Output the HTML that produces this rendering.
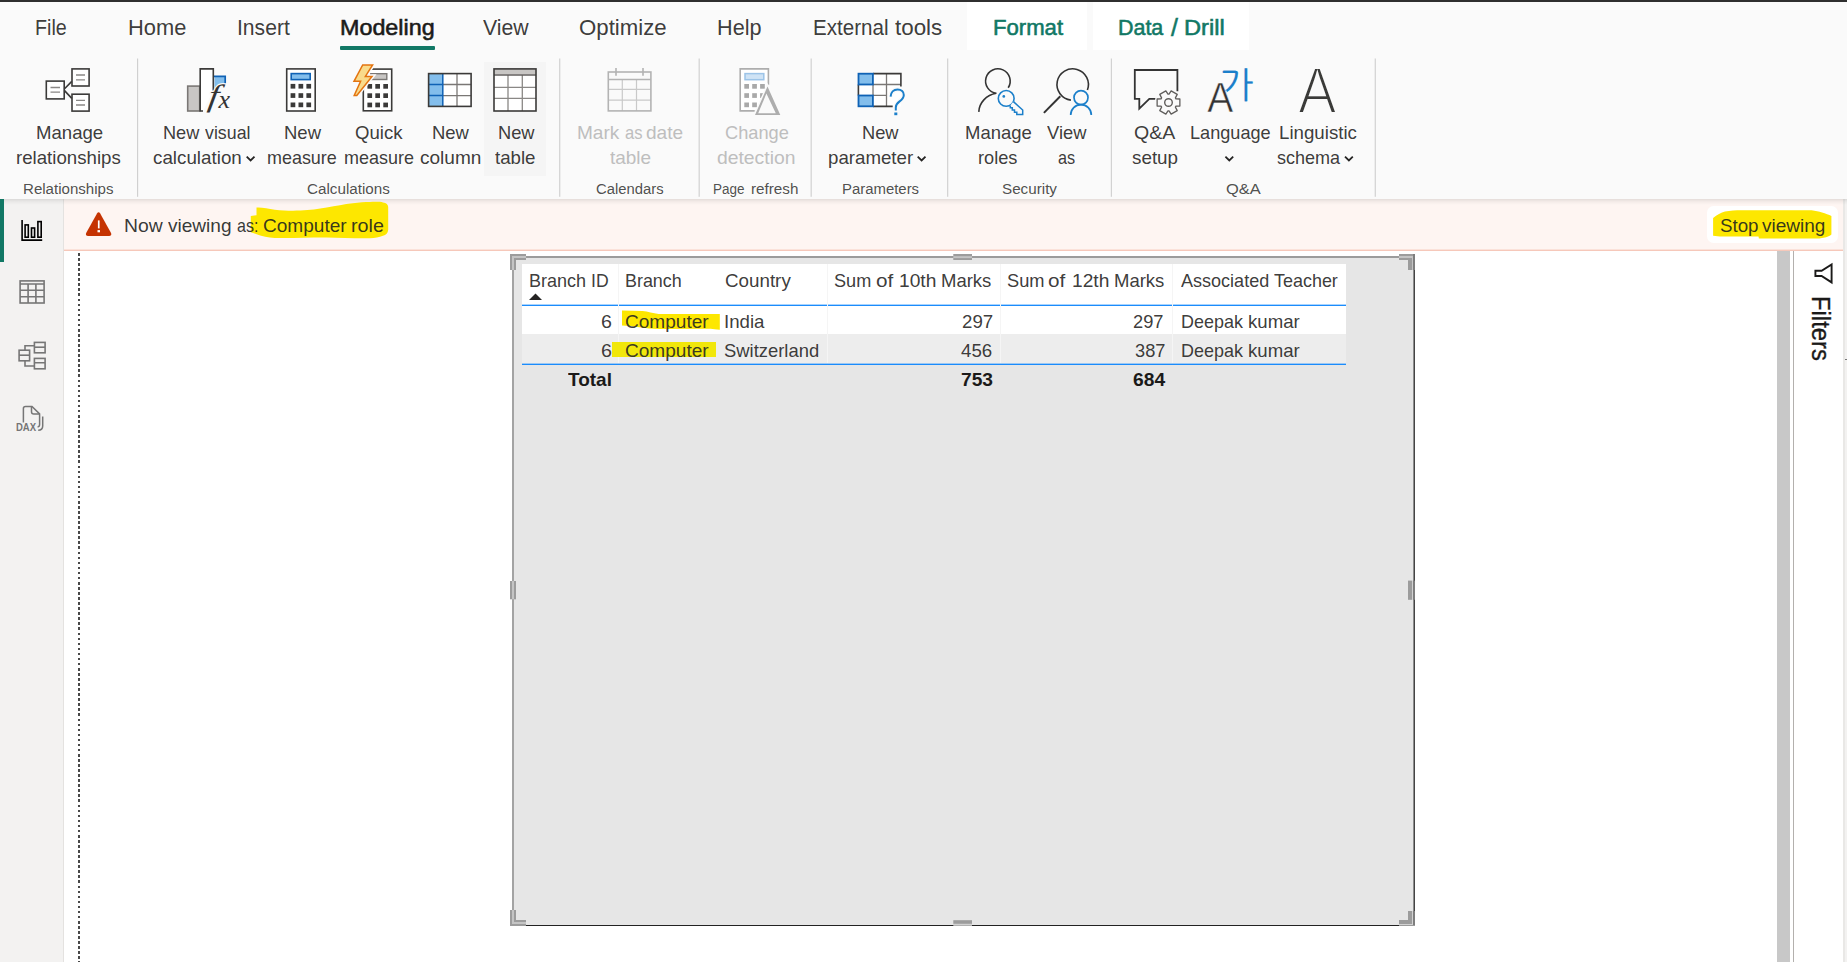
<!DOCTYPE html>
<html lang="en">
<head>
<meta charset="utf-8">
<title>Power BI Desktop - Modeling - View as role</title>
<style>
html,body{margin:0;padding:0;}
body{width:1847px;height:962px;overflow:hidden;position:relative;background:#fff;font-family:"Liberation Sans",sans-serif;color:#252423;}
.a{position:absolute;}
.t{position:absolute;white-space:pre;line-height:1;transform-origin:0 0;color:#252423;}
.sb{-webkit-text-stroke:0.55px currentColor;}
#topbar{left:0;top:0;width:1847px;height:2px;background:#2f2f2f;}
#tabrow{left:0;top:2px;width:1847px;height:48px;background:#fafafa;}
#ribbon{left:0;top:50px;width:1847px;height:149px;background:#fafafa;}
.ctab{top:2px;height:47.5px;background:#fff;}
.sep{top:59px;width:1px;height:138px;background:#d4d4d4;}
#hover{left:484px;top:62px;width:62px;height:113.5px;background:#f5f5f5;}
#mund{left:339.7px;top:46px;width:95.1px;height:3.8px;background:#117865;border-radius:1px;}
#side{left:0;top:199px;width:63px;height:763px;background:#f3f2f1;border-right:1px solid #e4e2e0;}
#selbar{left:0;top:199px;width:4px;height:63px;background:#117865;}
#note{left:64px;top:199px;width:1779.5px;height:50px;background:#fef5f2;}
#nb1{left:64px;top:249px;width:1779.5px;height:1px;background:#fbe2da;}
#nb2{left:64px;top:250px;width:1779.5px;height:1px;background:#f6c8ba;}
#shadow{left:0;top:199px;width:1847px;height:6px;background:linear-gradient(to bottom,rgba(0,0,0,.10),rgba(0,0,0,.04) 45%,rgba(0,0,0,0));}
#stopbtn{left:1706.7px;top:205.9px;width:131.2px;height:37.5px;background:#fff;border-radius:6.5px;}
#dots{left:78.2px;top:253px;width:2.3px;height:709px;background:repeating-linear-gradient(to bottom,#484848 0,#484848 2.6px,rgba(255,255,255,0) 2.6px,rgba(255,255,255,0) 5.06px);}
#vscroll{left:1777px;top:251px;width:13px;height:711px;background:#c8c8c8;}
#fline{left:1793px;top:251px;width:1px;height:711px;background:#b3b0ad;}
#rstrip{left:1843px;top:199px;width:4px;height:763px;background:linear-gradient(to right,#e9e8e6 0,#e9e8e6 50%,#f3f2f1 50%,#f3f2f1 100%);}
#rtick{left:1845px;top:359px;width:2px;height:1px;background:#777;}
#visual{left:512px;top:256px;width:903px;height:670px;background:#e6e6e6;}
#vb-l{left:512px;top:256px;width:2px;height:670px;background:#a3a3a3;}
#vb-t{left:512px;top:256px;width:903px;height:2px;background:#9b9b9b;}
#vb-r{left:1413px;top:256px;width:2px;height:670px;background:linear-gradient(to right,#8c8c8c 0,#8c8c8c 40%,#444 40%,#444 100%);}
#vb-b{left:512px;top:925px;width:903px;height:1px;background:#222;}
.hd{background:#9c9c9c;}
.hl{background:#c2c2c2;}
#thead{left:522px;top:264px;width:824px;height:41px;background:#fff;}
#row1{left:522px;top:306px;width:824px;height:28px;background:#fff;}
#row2{left:522px;top:334px;width:824px;height:30px;background:#ededed;}
.bl{left:522px;width:824px;height:2px;background:linear-gradient(to bottom,rgba(27,140,252,.38) 0,rgba(27,140,252,.38) 1px,#1b8cfc 1px,#1b8cfc 2px);}
.cs{top:264px;width:1px;height:99px;background:#f5f5f5;}
#filters{-webkit-text-stroke:0.35px #1b1a19;left:1834.1px;top:296.2px;font-size:26.5px;line-height:1;white-space:pre;transform-origin:0 0;color:#1b1a19;}
</style>
</head>
<body>
<div class="a" id="topbar"></div>
<div class="a" id="tabrow"></div>
<div class="a" id="ribbon"></div>
<div class="a ctab" style="left:967px;width:120px;"></div>
<div class="a ctab" style="left:1093px;width:156px;"></div>
<div class="a" id="mund"></div>
<div class="a" id="hover"></div>

<div class="a" id="side"></div>
<div class="a" id="note"></div>
<div class="a" id="nb1"></div>
<div class="a" id="nb2"></div>
<div class="a" id="rstrip"></div>
<div class="a" id="rtick"></div>
<div class="a" id="shadow"></div>
<div class="a" id="selbar"></div>
<div class="a" id="stopbtn"></div>

<div class="a" id="dots"></div>
<div class="a" id="vscroll"></div>
<div class="a" id="fline"></div>

<div class="a" id="visual"></div>
<div class="a" id="vb-l"></div>
<div class="a" id="vb-t"></div>
<div class="a" id="vb-r"></div>
<div class="a" id="vb-b"></div>
<div class="a" id="thead"></div>
<div class="a" id="row1"></div>
<div class="a" id="row2"></div>
<div class="a bl" style="top:304px"></div>
<div class="a cs" style="left:618px"></div>
<div class="a cs" style="left:827px"></div>
<div class="a cs" style="left:1000px"></div>
<div class="a cs" style="left:1172px"></div>
<div class="a bl" style="top:363px"></div>

<svg class="a" style="left:0;top:0;pointer-events:none" width="1847" height="962" viewBox="0 0 1847 962">
<rect x="137.0" y="58.5" width="1.15" height="138.3" fill="#d0d0d0"/>
<rect x="559.15" y="58.5" width="1.15" height="138.3" fill="#d0d0d0"/>
<rect x="698.6" y="58.5" width="1.15" height="138.3" fill="#d0d0d0"/>
<rect x="810.6" y="58.5" width="1.15" height="138.3" fill="#d0d0d0"/>
<rect x="947.1" y="58.5" width="1.15" height="138.3" fill="#d0d0d0"/>
<rect x="1110.8" y="58.5" width="1.15" height="138.3" fill="#d0d0d0"/>
<rect x="1374.7" y="58.5" width="1.15" height="138.3" fill="#d0d0d0"/>
<g fill="#fde700">
<path d="M250.8 216 L256.5 215.2 L256.5 207.6 C262 207.2 268 209 274.7 209.7 C284 210.8 292 210.8 300.7 210.6 C310 210.2 318 209.2 326.7 207.6 C336 205.8 344 204.2 352.7 203.2 C359 202.3 365 201.9 370 201.9 C376 201.8 381 201.8 383 202.4 C386.5 203 388.2 204.5 388.2 207 L388.2 229.7 C388 233 386 235 383 235.8 C379 237.4 375 238.2 370 238.3 C356 238.6 340 237.7 326.7 237.5 C310 237.4 292 238.2 274.7 237.9 C268 237.6 262 236.2 257.3 234.4 L250.8 232.3 Z"/>
<path d="M1713.1 217.9 C1717 215 1721 212.8 1725 211.6 C1730 210.4 1736 210.2 1741.4 210.2 L1811.5 210.2 C1815.5 210.6 1819 211.6 1822 212.5 C1825.5 213.5 1829 214.8 1831.4 216 L1831.4 234.6 C1830 236 1827.5 237 1825 237.5 C1823 238 1821 238.3 1819.4 238.4 L1758.9 238.4 L1758.5 236.5 L1719.9 236.5 L1713.1 235.8 Z"/>
<path d="M622 310.5 L642.5 311.1 C648 311.6 653 313.6 658.7 314 L719.8 314.1 L719.8 329.7 C716 329.6 713 328.9 710.7 328.7 L668.5 329 C662 329 655 328.8 649 328.4 C642 327.8 636 326.9 629.5 326.1 L622 325.4 Z"/>
</g>
<path fill="#f1e70b" d="M612 342 L716 342 L716 357 L612 357 Z"/>
<g fill="#fff" stroke="#3b3a39" stroke-width="1.6">
<rect x="46.3" y="81.1" width="17.9" height="17.8"/><rect x="72" y="68.9" width="17.1" height="17.1"/><rect x="72" y="94.2" width="17.1" height="16.9"/>
<path fill="none" d="M64.3 89 L71.8 81.4 M64.3 90.4 L71.8 98.4"/>
</g>
<g stroke="#8a8886" stroke-width="1.3" fill="none"><path d="M50.5 87.5H60M50.5 92.2H60M76 75H85M76 79.8H85M76 100.3H85M76 105H85"/></g>
<rect x="187.7" y="86.1" width="12" height="24.9" fill="#c8c6c4" stroke="#7a7775" stroke-width="1.6"/>
<path d="M226 83.5 L226 76.4 L214.5 76.4 L214.5 90 C216 86 220 83.8 226 83.5Z" fill="#83beec"/>
<path d="M214 76.4 L225.2 76.4 L225.2 83.6" fill="none" stroke="#0f62b5" stroke-width="1.7"/>
<path d="M213.3 90.6 L213.3 68.9 L200.2 68.9 L200.2 111 L203 111" fill="#fff" stroke="#3b3a39" stroke-width="1.6"/>
<text transform="translate(207.2 106.2) skewX(-9) scale(1.2 1)" x="0" y="0" font-family="'Liberation Serif',serif" font-style="italic" font-size="31" fill="#333" stroke="#fafafa" stroke-width="2.2" paint-order="stroke">f</text>
<text x="218.4" y="108.4" font-family="'Liberation Serif',serif" font-style="italic" font-size="26" fill="#333" stroke="#fafafa" stroke-width="2.4" paint-order="stroke">x</text>
<rect x="286.7" y="68.9" width="28.5" height="42.1" fill="#fff" stroke="#3b3a39" stroke-width="1.6"/>
<rect x="291.2" y="73.6" width="19" height="6" fill="#83beec" stroke="#0f62b5" stroke-width="1.6"/>
<g fill="#3b3a39"><rect x="290.6" y="83.9" width="4.7" height="4.7"/><rect x="298.5" y="83.9" width="4.7" height="4.7"/><rect x="306.4" y="83.9" width="4.7" height="4.7"/><rect x="290.6" y="93.2" width="4.7" height="4.7"/><rect x="298.5" y="93.2" width="4.7" height="4.7"/><rect x="306.4" y="93.2" width="4.7" height="4.7"/><rect x="290.6" y="102.5" width="4.7" height="4.7"/><rect x="298.5" y="102.5" width="4.7" height="4.7"/><rect x="306.4" y="102.5" width="4.7" height="4.7"/></g>
<rect x="363.3" y="69.1" width="28.4" height="41.7" fill="#fff" stroke="#3b3a39" stroke-width="1.6"/>
<rect x="370.8" y="73.7" width="16" height="5.8" fill="#c8c6c4" stroke="#7a7775" stroke-width="1.4"/>
<g fill="#3b3a39"><rect x="367.4" y="84" width="4.7" height="4.7"/><rect x="375.3" y="84" width="4.7" height="4.7"/><rect x="383.3" y="84" width="4.7" height="4.7"/><rect x="367.4" y="93.3" width="4.7" height="4.7"/><rect x="375.3" y="93.3" width="4.7" height="4.7"/><rect x="383.3" y="93.3" width="4.7" height="4.7"/><rect x="367.4" y="102.6" width="4.7" height="4.7"/><rect x="375.3" y="102.6" width="4.7" height="4.7"/><rect x="383.3" y="102.6" width="4.7" height="4.7"/></g>
<path d="M362.7 65 L372.6 65 L365.4 76.4 L372 76.4 L356.8 95.4 L354.2 95.4 L360.6 81.3 L354 81.3 Z" fill="#fafafa" stroke="#fafafa" stroke-width="4.4" stroke-linejoin="miter"/>
<path d="M362.7 65 L372.6 65 L365.4 76.4 L372 76.4 L356.8 95.4 L354.2 95.4 L360.6 81.3 L354 81.3 Z" fill="#f9db8b" stroke="#e37410" stroke-width="1.5" stroke-linejoin="miter"/>
<rect x="428.6" y="73.6" width="42.5" height="32.8" fill="#fff" stroke="none"/>
<rect x="428.6" y="73.6" width="14.2" height="32.8" fill="#83beec"/>
<path d="M457 73.6V106.4M442.8 84.5H471M442.8 95.6H471" stroke="#7a7775" stroke-width="1.3" fill="none"/>
<path d="M442.8 73.6V106.4M429 84.5H442.8M429 95.6H442.8" stroke="#0f62b5" stroke-width="1.5" fill="none"/>
<rect x="428.6" y="73.6" width="42.5" height="32.8" fill="none" stroke="#3b3a39" stroke-width="1.6"/>
<rect x="494" y="68.9" width="42" height="42.1" fill="#fff"/>
<rect x="494" y="69" width="42" height="5.4" fill="#c8c6c4"/>
<path d="M508 75V111M522.3 75V111M494 87.4H536M494 98.4H536" stroke="#8a8886" stroke-width="1.3" fill="none"/>
<path d="M494 75H536" stroke="#605e5c" stroke-width="1.5" fill="none"/>
<rect x="494" y="68.9" width="42" height="42.1" fill="none" stroke="#3b3a39" stroke-width="1.6"/>
<g fill="none" stroke="#c9c9c9" stroke-width="1.2"><path d="M622.3 79.5V111M636.5 79.5V111M608 89.3H651M608 100.1H651"/></g>
<g fill="none" stroke="#b3b3b3" stroke-width="1.6"><rect x="608.3" y="72" width="42.6" height="38.9" fill="none"/><path d="M608 79.5H651M616 68V75.8M643 68V75.8"/></g>
<path d="M768.4 84.7V68.9H740.2V110.9H754.7" fill="#fff" stroke="#adadad" stroke-width="1.6"/>
<rect x="745" y="73.6" width="18.8" height="6.1" fill="#cfe3f5" stroke="#9cc4e8" stroke-width="1.5"/>
<g fill="#a9a9a9"><rect x="744.3" y="84" width="4.7" height="4.7"/><rect x="752.2" y="84" width="4.7" height="4.7"/><rect x="760.1" y="84" width="4.7" height="4.7"/><rect x="744.3" y="93.2" width="4.7" height="4.7"/><rect x="752.2" y="93.2" width="4.7" height="4.7"/><rect x="760.1" y="93.2" width="4.7" height="4.7"/><rect x="744.3" y="102.5" width="4.7" height="4.7"/><rect x="752.2" y="102.5" width="4.7" height="4.7"/><rect x="760.1" y="102.5" width="4.7" height="4.7"/></g>
<path d="M767.5 86.5 L780.3 115 L755 115 Z" fill="#fafafa" stroke="#fafafa" stroke-width="3"/>
<path d="M767.5 86.5 L780.3 115 L755 115 Z M766.4 93.6 L758.2 113.3 L775.8 113.3 Z" fill="#adadad" fill-rule="evenodd"/>
<rect x="858.4" y="73.6" width="42.5" height="32.8" fill="#fff"/>
<path d="M886.5 73.6V106.4M873 84.5H901M873 95.4H886.5M873 84.5V95.4" stroke="#7a7775" stroke-width="1.3" fill="none"/>
<path d="M858.4 84.5V95.4M873 73.6H900.9V86.5M873 106.4H892.7" stroke="#3b3a39" stroke-width="1.6" fill="none"/>
<rect x="858.5" y="73.7" width="14.4" height="10.8" fill="#83beec" stroke="#0f62b5" stroke-width="1.8"/>
<rect x="858.5" y="95.5" width="14.4" height="10.8" fill="#83beec" stroke="#0f62b5" stroke-width="1.8"/>
<path d="M890.6 96.6 C890.8 92.4 893.6 89.4 897.6 89.4 C901.4 89.4 903.8 92 903.8 95 C903.8 98 902 99.6 899.6 101.4 C897 103.3 895.8 104.8 895.8 107.6 L895.8 110.4" fill="none" stroke="#fafafa" stroke-width="5"/>
<path d="M890.6 96.6 C890.8 92.4 893.6 89.4 897.6 89.4 C901.4 89.4 903.8 92 903.8 95 C903.8 98 902 99.6 899.6 101.4 C897 103.3 895.8 104.8 895.8 107.6 L895.8 110.4" fill="none" stroke="#1b7fca" stroke-width="2"/>
<rect x="894.3" y="112.5" width="3" height="2.7" fill="#1b7fca"/>
<path d="M1008.2 87.8 A12.3 12.3 0 1 0 996.4 93.3 C986 95 979.2 103 978.8 111.9" fill="none" stroke="#333" stroke-width="1.6"/>
<circle cx="1006.2" cy="98.4" r="9.6" fill="#fafafa"/>
<circle cx="1006.2" cy="98.4" r="7.9" fill="#fafafa" stroke="#1b7fca" stroke-width="1.6"/>
<path d="M1013.4 101.6 L1022.7 110 L1022.7 114.6 L1016.8 114.6 L1016.8 112.3 L1014.5 112.3 L1014.5 110 L1012.3 110 L1012.3 107.8 L1010.3 107.8 L1010.3 105.4" fill="#fafafa" stroke="#1b7fca" stroke-width="1.5" stroke-linejoin="miter"/>
<circle cx="1003.8" cy="96.4" r="1.35" fill="#1b7fca"/>
<path d="M1087.4 90 A15.7 15.7 0 1 0 1070.9 100.1" fill="none" stroke="#333" stroke-width="1.6"/>
<path d="M1060.3 96.2 L1043.9 112.9" fill="none" stroke="#333" stroke-width="2"/>
<circle cx="1081" cy="97.6" r="8.8" fill="#fafafa"/>
<circle cx="1081" cy="97.6" r="7" fill="none" stroke="#1b7fca" stroke-width="1.7"/>
<path d="M1070.7 115 A10.3 10.3 0 0 1 1091.3 115" fill="none" stroke="#1b7fca" stroke-width="1.7"/>
<path d="M1177.4 91.2V70H1134.8V98.9H1139.3V108.6L1149.3 98.9H1157" fill="none" stroke="#333" stroke-width="1.8"/>
<path d="M1175.94 98.82 L1179.87 98.98 L1179.87 106.02 L1175.94 106.18 L1175.41 107.10 L1177.23 110.59 L1171.14 114.10 L1169.03 110.78 L1167.97 110.78 L1165.86 114.10 L1159.77 110.59 L1161.59 107.10 L1161.06 106.18 L1157.13 106.02 L1157.13 98.98 L1161.06 98.82 L1161.59 97.90 L1159.77 94.41 L1165.86 90.90 L1167.97 94.22 L1169.03 94.22 L1171.14 90.90 L1177.23 94.41 L1175.41 97.90 Z" fill="#fafafa" stroke="#fafafa" stroke-width="4" stroke-linejoin="round"/>
<path d="M1175.94 98.82 L1179.87 98.98 L1179.87 106.02 L1175.94 106.18 L1175.41 107.10 L1177.23 110.59 L1171.14 114.10 L1169.03 110.78 L1167.97 110.78 L1165.86 114.10 L1159.77 110.59 L1161.59 107.10 L1161.06 106.18 L1157.13 106.02 L1157.13 98.98 L1161.06 98.82 L1161.59 97.90 L1159.77 94.41 L1165.86 90.90 L1167.97 94.22 L1169.03 94.22 L1171.14 90.90 L1177.23 94.41 L1175.41 97.90 Z" fill="#fafafa" stroke="#605e5c" stroke-width="1.3" stroke-linejoin="round"/>
<circle cx="1168.5" cy="102.5" r="3.8" fill="none" stroke="#605e5c" stroke-width="1.4"/>
<clipPath id="gaclip"><path d="M1215 60H1262V110H1230.5L1226.5 90.6H1215Z"/></clipPath>
<text x="1207.3" y="112.4" font-family="'Liberation Sans',sans-serif" font-size="43" fill="#333" stroke="#fafafa" stroke-width="0.6" textLength="26.0" lengthAdjust="spacingAndGlyphs">A</text>
<text x="1219.5" y="98.4" font-family="'Liberation Sans','NanumGothic','Noto Sans CJK KR',sans-serif" font-size="36" fill="#1b7fca" stroke="#1b7fca" stroke-width="0.2" clip-path="url(#gaclip)">가</text>
<text x="1298" y="113" font-family="'Liberation Sans',sans-serif" font-size="64.4" fill="#3a3a38" stroke="#fafafa" stroke-width="2.2" textLength="38.6" lengthAdjust="spacingAndGlyphs">A</text>
<path d="M246.7 156.7 L250.6 160.5 L254.5 156.7" fill="none" stroke="#252423" stroke-width="1.8"/>
<path d="M917.7 156.7 L921.6 160.5 L925.5 156.7" fill="none" stroke="#252423" stroke-width="1.8"/>
<path d="M1225.4 156.7 L1229.3 160.5 L1233.2 156.7" fill="none" stroke="#252423" stroke-width="1.8"/>
<path d="M1345.0 156.7 L1348.9 160.5 L1352.8 156.7" fill="none" stroke="#252423" stroke-width="1.8"/>
<g fill="none" stroke="#000" stroke-width="1.6"><path d="M22.1 220V240.1H42.2"/><rect x="25.1" y="224.9" width="3.2" height="12.3"/><rect x="31.5" y="228" width="3.1" height="9.2"/><rect x="37.9" y="221.6" width="3.3" height="15.6"/></g>
<g fill="none" stroke="#767676" stroke-width="1.6"><rect x="20.1" y="280.9" width="24" height="22.1"/><path d="M20 284H44M28.1 284V303M35.9 284V303M20 290.3H44M20 296.7H44"/></g>
<g fill="none" stroke="#767676" stroke-width="1.6"><rect x="19.1" y="350.2" width="10.5" height="10.6"/><path d="M19 355.2H29.6"/><rect x="34.4" y="342.4" width="10.7" height="10.4"/><path d="M34.4 347.2H45"/><rect x="34.4" y="358.4" width="10.7" height="10.4"/><path d="M34.4 362.8H45M25 350.2V345.7H34.4M25 360.8V366H34.4"/></g>
<g fill="none" stroke="#767676" stroke-width="1.5"><path d="M23.4 422.4V408.6C23.4 407.3 24.2 406.5 25.5 406.5H32L39.6 413.9V424.6C39.6 426 38.8 426.8 37.6 427"/><path d="M31.5 406.8V411.8C31.5 413.2 32.4 414.1 33.8 414.1H39.4"/><path d="M42.7 416.4V426C42.7 428.6 41 430.2 38.2 430.3"/></g>
<path d="M97 213.6 Q98.6 211 100.2 213.6 L110.9 232.8 Q112.3 235.9 109 236 L88.2 236 Q84.9 235.9 86.3 232.8 Z" fill="#c53302"/>
<rect x="97.9" y="220.4" width="1.7" height="8" fill="#fff"/><rect x="97.5" y="230.1" width="2.5" height="2.2" fill="#fff"/>
<path d="M1831.6 264.4 L1831.6 282.4 L1821.6 276 L1815.4 276 L1815.4 270.8 L1821.6 270.8 Z" fill="none" stroke="#1b1a19" stroke-width="1.9" stroke-linejoin="miter"/>
<rect x="510" y="254" width="16" height="6" fill="#9c9c9c"/><rect x="510" y="254" width="6" height="16" fill="#9c9c9c"/><rect x="512" y="256" width="14" height="2" fill="#c4c4c4"/><rect x="512" y="256" width="2" height="14" fill="#c4c4c4"/>
<rect x="510" y="920" width="16" height="6" fill="#9c9c9c"/><rect x="510" y="910" width="6" height="16" fill="#9c9c9c"/><rect x="512" y="922" width="14" height="2" fill="#c4c4c4"/><rect x="512" y="910" width="2" height="14" fill="#c4c4c4"/>
<rect x="1399" y="254" width="16" height="2" fill="#9c9c9c"/><rect x="1399" y="256" width="14" height="2" fill="#c4c4c4"/><rect x="1399" y="258" width="13" height="2" fill="#9c9c9c"/><rect x="1408" y="258" width="4" height="12" fill="#9c9c9c"/><rect x="1412" y="256" width="1" height="14" fill="#c4c4c4"/><rect x="1413" y="254" width="2" height="16" fill="#7e7e7e"/>
<rect x="1408" y="580.6" width="4" height="19.2" fill="#9c9c9c"/><rect x="1412" y="580.6" width="1" height="19.2" fill="#d2d2d2"/><rect x="1413" y="580.6" width="2" height="19.2" fill="#7e7e7e"/>
<rect x="1408" y="911" width="4" height="13" fill="#9c9c9c"/><rect x="1412" y="911" width="1" height="14" fill="#d2d2d2"/><rect x="1413" y="911" width="2" height="15" fill="#7e7e7e"/><rect x="1399" y="920" width="13" height="4" fill="#9c9c9c"/><rect x="1399" y="924" width="14" height="1" fill="#d2d2d2"/><rect x="1399" y="925" width="16" height="1" fill="#9a9a9a"/>
<rect x="953.3" y="254" width="18.7" height="6" fill="#9c9c9c"/><rect x="953.3" y="256.2" width="18.7" height="1.9" fill="#c4c4c4"/>
<rect x="953.3" y="920.2" width="18.7" height="3.7" fill="#9c9c9c"/><rect x="953.3" y="923.9" width="18.7" height="1.1" fill="#d2d2d2"/><rect x="953.3" y="925" width="18.7" height="1" fill="#b0b0b0"/>
<rect x="510" y="581" width="6" height="18.3" fill="#9c9c9c"/><rect x="512" y="581" width="2" height="18.3" fill="#c4c4c4"/>
<path d="M529 300 L535.5 293.4 L542 300 Z" fill="#252423"/>
</svg>
<span class="t" style="left:35.49px;top:16.80px;font-size:21.6px;transform:scaleX(0.9113);color:rgba(37,36,35,.9);">File</span>
<span class="t" style="left:127.96px;top:16.80px;font-size:21.6px;transform:scaleX(1.0124);color:rgba(37,36,35,.9);">Home</span>
<span class="t" style="left:236.88px;top:16.80px;font-size:21.6px;transform:scaleX(0.9770);color:rgba(37,36,35,.9);">Insert</span>
<span class="t sb" style="left:339.86px;top:16.80px;font-size:21.6px;transform:scaleX(1.0799);color:#1b1a19;">Modeling</span>
<span class="t" style="left:482.50px;top:16.80px;font-size:21.6px;transform:scaleX(0.9843);color:rgba(37,36,35,.9);">View</span>
<span class="t" style="left:578.95px;top:16.80px;font-size:21.6px;transform:scaleX(1.0286);color:rgba(37,36,35,.9);">Optimize</span>
<span class="t" style="left:716.66px;top:16.80px;font-size:21.6px;transform:scaleX(1.0024);color:rgba(37,36,35,.9);">Help</span>
<span class="g"><span class="t" style="left:812.55px;top:16.80px;font-size:21.6px;transform:scaleX(0.9532);color:rgba(37,36,35,.9);">External</span> <span class="t" style="left:894.52px;top:16.80px;font-size:21.6px;transform:scaleX(1.0364);color:rgba(37,36,35,.9);">tools</span></span>
<span class="t sb" style="left:993.24px;top:16.80px;font-size:21.6px;transform:scaleX(1.0240);color:#117865;">Format</span>
<span class="g"><span class="t sb" style="left:1117.84px;top:16.80px;font-size:21.6px;transform:scaleX(0.9932);color:#117865;">Data</span> <span class="t sb nofit" style="left:1171.05px;top:16.38px;font-size:24.84px;transform:scaleX(1.0000);color:#117865;">/</span> <span class="t sb" style="left:1183.64px;top:16.80px;font-size:21.6px;transform:scaleX(1.0945);color:#117865;">Drill</span></span>
<span class="g"><span class="t" style="left:35.76px;top:123.85px;font-size:18.1px;transform:scaleX(1.0270);color:rgba(37,36,35,.9);">Manage</span> <span class="t" style="left:16.04px;top:148.95px;font-size:18.1px;transform:scaleX(1.0312);color:rgba(37,36,35,.9);">relationships</span></span>
<span class="g"><span class="t" style="left:162.72px;top:123.85px;font-size:18.1px;transform:scaleX(1.0036);color:rgba(37,36,35,.9);">New</span> <span class="t" style="left:205.35px;top:123.85px;font-size:18.1px;transform:scaleX(0.9829);color:rgba(37,36,35,.9);">visual</span> <span class="t" style="left:152.92px;top:148.95px;font-size:18.1px;transform:scaleX(1.0384);color:rgba(37,36,35,.9);">calculation</span></span>
<span class="g"><span class="t" style="left:283.64px;top:123.85px;font-size:18.1px;transform:scaleX(1.0222);color:rgba(37,36,35,.9);">New</span> <span class="t" style="left:267.44px;top:148.95px;font-size:18.1px;transform:scaleX(0.9916);color:rgba(37,36,35,.9);">measure</span></span>
<span class="g"><span class="t" style="left:354.50px;top:123.85px;font-size:18.1px;transform:scaleX(1.0259);color:rgba(37,36,35,.9);">Quick</span> <span class="t" style="left:344.32px;top:148.95px;font-size:18.1px;transform:scaleX(0.9936);color:rgba(37,36,35,.9);">measure</span></span>
<span class="g"><span class="t" style="left:431.94px;top:123.85px;font-size:18.1px;transform:scaleX(1.0202);color:rgba(37,36,35,.9);">New</span> <span class="t" style="left:419.62px;top:148.95px;font-size:18.1px;transform:scaleX(1.0530);color:rgba(37,36,35,.9);">column</span></span>
<span class="g"><span class="t" style="left:497.60px;top:123.85px;font-size:18.1px;transform:scaleX(1.0104);color:rgba(37,36,35,.9);">New</span> <span class="t" style="left:495.05px;top:148.95px;font-size:18.1px;transform:scaleX(1.0321);color:rgba(37,36,35,.9);">table</span></span>
<span class="g"><span class="t" style="left:577.13px;top:123.85px;font-size:18.1px;transform:scaleX(1.0529);color:#bebebe;">Mark</span> <span class="t" style="left:624.58px;top:123.85px;font-size:18.1px;transform:scaleX(0.9160);color:#bebebe;">as</span> <span class="t" style="left:645.97px;top:123.85px;font-size:18.1px;transform:scaleX(1.0529);color:#bebebe;">date</span> <span class="t" style="left:609.78px;top:148.95px;font-size:18.1px;transform:scaleX(1.0477);color:#bebebe;">table</span></span>
<span class="g"><span class="t" style="left:724.50px;top:123.85px;font-size:18.1px;transform:scaleX(1.0068);color:#bebebe;">Change</span> <span class="t" style="left:716.63px;top:148.95px;font-size:18.1px;transform:scaleX(1.0684);color:#bebebe;">detection</span></span>
<span class="g"><span class="t" style="left:862.20px;top:123.85px;font-size:18.1px;transform:scaleX(1.0104);color:rgba(37,36,35,.9);">New</span> <span class="t" style="left:827.97px;top:148.95px;font-size:18.1px;transform:scaleX(1.0327);color:rgba(37,36,35,.9);">parameter</span></span>
<span class="g"><span class="t" style="left:964.61px;top:123.85px;font-size:18.1px;transform:scaleX(1.0204);color:rgba(37,36,35,.9);">Manage</span> <span class="t" style="left:978.13px;top:148.95px;font-size:18.1px;transform:scaleX(1.0051);color:rgba(37,36,35,.9);">roles</span></span>
<span class="g"><span class="t" style="left:1046.96px;top:123.85px;font-size:18.1px;transform:scaleX(1.0136);color:rgba(37,36,35,.9);">View</span> <span class="t" style="left:1058.32px;top:148.95px;font-size:18.1px;transform:scaleX(0.8969);color:rgba(37,36,35,.9);">as</span></span>
<span class="g"><span class="t" style="left:1134.45px;top:123.85px;font-size:18.1px;transform:scaleX(1.0811);color:rgba(37,36,35,.9);">Q&amp;A</span> <span class="t" style="left:1132.40px;top:148.95px;font-size:18.1px;transform:scaleX(1.0402);color:rgba(37,36,35,.9);">setup</span></span>
<span class="g"><span class="t" style="left:1190.15px;top:123.85px;font-size:18.1px;transform:scaleX(1.0019);color:rgba(37,36,35,.9);">Language</span></span>
<span class="g"><span class="t" style="left:1279.03px;top:123.85px;font-size:18.1px;transform:scaleX(1.0329);color:rgba(37,36,35,.9);">Linguistic</span> <span class="t" style="left:1276.86px;top:148.95px;font-size:18.1px;transform:scaleX(0.9957);color:rgba(37,36,35,.9);">schema</span></span>
<span class="t" style="left:23.03px;top:180.75px;font-size:15.5px;transform:scaleX(0.9722);color:rgba(59,58,57,.9);">Relationships</span>
<span class="t" style="left:306.84px;top:180.75px;font-size:15.5px;transform:scaleX(0.9819);color:rgba(59,58,57,.9);">Calculations</span>
<span class="t" style="left:595.71px;top:180.75px;font-size:15.5px;transform:scaleX(0.9565);color:rgba(59,58,57,.9);">Calendars</span>
<span class="g"><span class="t" style="left:713.38px;top:180.75px;font-size:15.5px;transform:scaleX(0.8699);color:rgba(59,58,57,.9);">Page</span> <span class="t" style="left:750.64px;top:180.75px;font-size:15.5px;transform:scaleX(0.9833);color:rgba(59,58,57,.9);">refresh</span></span>
<span class="t" style="left:841.78px;top:180.75px;font-size:15.5px;transform:scaleX(0.9618);color:rgba(59,58,57,.9);">Parameters</span>
<span class="t" style="left:1001.94px;top:180.75px;font-size:15.5px;transform:scaleX(0.9819);color:rgba(59,58,57,.9);">Security</span>
<span class="t" style="left:1225.58px;top:180.75px;font-size:15.5px;transform:scaleX(1.0628);color:rgba(59,58,57,.9);">Q&amp;A</span>
<span class="g"><span class="t" style="left:123.61px;top:216.95px;font-size:18.1px;transform:scaleX(1.0695);color:rgba(32,31,30,.9);">Now</span> <span class="t" style="left:168.23px;top:216.95px;font-size:18.1px;transform:scaleX(1.0527);color:rgba(32,31,30,.9);">viewing</span> <span class="t" style="left:237.00px;top:216.95px;font-size:18.1px;transform:scaleX(0.8870);color:rgba(32,31,30,.9);">as:</span> <span class="t" style="left:262.93px;top:216.95px;font-size:18.1px;transform:scaleX(1.0527);color:rgba(32,31,30,.9);">Computer</span> <span class="t" style="left:351.12px;top:216.95px;font-size:18.1px;transform:scaleX(1.0887);color:rgba(32,31,30,.9);">role</span></span>
<span class="g"><span class="t" style="left:1719.54px;top:216.95px;font-size:18.1px;transform:scaleX(1.0348);color:rgba(32,31,30,.9);">Stop</span> <span class="t" style="left:1762.13px;top:216.95px;font-size:18.1px;transform:scaleX(1.0503);color:rgba(32,31,30,.9);">viewing</span></span>
<span class="g"><span class="t" style="left:529.14px;top:271.55px;font-size:18.1px;transform:scaleX(0.9966);color:rgba(37,36,35,.9);">Branch</span> <span class="t" style="left:591.10px;top:271.55px;font-size:18.1px;transform:scaleX(0.9750);color:rgba(37,36,35,.9);">ID</span></span>
<span class="t" style="left:625.46px;top:271.55px;font-size:18.1px;transform:scaleX(0.9899);color:rgba(37,36,35,.9);">Branch</span>
<span class="t" style="left:724.72px;top:271.55px;font-size:18.1px;transform:scaleX(1.0381);color:rgba(37,36,35,.9);">Country</span>
<span class="g"><span class="t" style="left:834.21px;top:271.55px;font-size:18.1px;transform:scaleX(1.0012);color:rgba(37,36,35,.9);">Sum</span> <span class="t" style="left:876.48px;top:271.55px;font-size:18.1px;transform:scaleX(1.1414);color:rgba(37,36,35,.9);">of</span> <span class="t" style="left:898.77px;top:271.55px;font-size:18.1px;transform:scaleX(1.0611);color:rgba(37,36,35,.9);">10th</span> <span class="t" style="left:940.90px;top:271.55px;font-size:18.1px;transform:scaleX(1.0227);color:rgba(37,36,35,.9);">Marks</span></span>
<span class="g"><span class="t" style="left:1006.79px;top:271.55px;font-size:18.1px;transform:scaleX(1.0089);color:rgba(37,36,35,.9);">Sum</span> <span class="t" style="left:1048.48px;top:271.55px;font-size:18.1px;transform:scaleX(1.1414);color:rgba(37,36,35,.9);">of</span> <span class="t" style="left:1071.57px;top:271.55px;font-size:18.1px;transform:scaleX(1.0611);color:rgba(37,36,35,.9);">12th</span> <span class="t" style="left:1113.70px;top:271.55px;font-size:18.1px;transform:scaleX(1.0227);color:rgba(37,36,35,.9);">Marks</span></span>
<span class="g"><span class="t" style="left:1180.75px;top:271.55px;font-size:18.1px;transform:scaleX(0.9967);color:rgba(37,36,35,.9);">Associated</span> <span class="t" style="left:1273.74px;top:271.55px;font-size:18.1px;transform:scaleX(0.9918);color:rgba(37,36,35,.9);">Teacher</span></span>
<span class="t" style="left:600.79px;top:312.55px;font-size:18.1px;transform:scaleX(1.0869);color:rgba(37,36,35,.9);">6</span>
<span class="t" style="left:624.76px;top:312.55px;font-size:18.1px;transform:scaleX(1.0533);color:rgba(37,36,35,.9);">Computer</span>
<span class="t" style="left:723.63px;top:312.55px;font-size:18.1px;transform:scaleX(1.0324);color:rgba(37,36,35,.9);">India</span>
<span class="t" style="left:961.53px;top:312.55px;font-size:18.1px;transform:scaleX(1.0325);color:rgba(37,36,35,.9);">297</span>
<span class="t" style="left:1133.40px;top:312.55px;font-size:18.1px;transform:scaleX(1.0093);color:rgba(37,36,35,.9);">297</span>
<span class="g"><span class="t" style="left:1180.69px;top:312.55px;font-size:18.1px;transform:scaleX(0.9919);color:rgba(37,36,35,.9);">Deepak</span> <span class="t" style="left:1248.10px;top:312.55px;font-size:18.1px;transform:scaleX(1.0292);color:rgba(37,36,35,.9);">kumar</span></span>
<span class="t" style="left:600.79px;top:341.95px;font-size:18.1px;transform:scaleX(1.0870);color:rgba(37,36,35,.9);">6</span>
<span class="t" style="left:624.77px;top:341.95px;font-size:18.1px;transform:scaleX(1.0535);color:rgba(37,36,35,.9);">Computer</span>
<span class="t" style="left:724.46px;top:341.95px;font-size:18.1px;transform:scaleX(1.0177);color:rgba(37,36,35,.9);">Switzerland</span>
<span class="t" style="left:961.12px;top:341.95px;font-size:18.1px;transform:scaleX(1.0335);color:rgba(37,36,35,.9);">456</span>
<span class="t" style="left:1134.99px;top:341.95px;font-size:18.1px;transform:scaleX(1.0070);color:rgba(37,36,35,.9);">387</span>
<span class="g"><span class="t" style="left:1180.69px;top:341.95px;font-size:18.1px;transform:scaleX(0.9919);color:rgba(37,36,35,.9);">Deepak</span> <span class="t" style="left:1248.10px;top:341.95px;font-size:18.1px;transform:scaleX(1.0291);color:rgba(37,36,35,.9);">kumar</span></span>
<span class="t" style="left:567.87px;top:370.75px;font-size:18.1px;transform:scaleX(1.0497);font-weight:700;color:#1b1a19;">Total</span>
<span class="t" style="left:960.55px;top:370.75px;font-size:18.1px;transform:scaleX(1.0603);font-weight:700;color:#1b1a19;">753</span>
<span class="t" style="left:1132.91px;top:370.75px;font-size:18.1px;transform:scaleX(1.0643);font-weight:700;color:#1b1a19;">684</span>
<span class="t" style="left:16.20px;top:422.80px;font-size:10.0px;transform:scaleX(0.9513);font-weight:700;color:#757575;">DAX</span>
<div class="a" id="filters" style="transform:rotate(90deg) scaleX(0.9);">Filters</div>

</body>
</html>
